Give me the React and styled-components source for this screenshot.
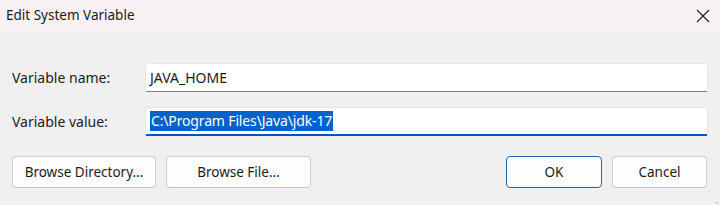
import React from "react";
import styled, { createGlobalStyle } from "styled-components";

const Global = createGlobalStyle`
  html, body { margin: 0; padding: 0; background: #f0f0f0; }
  body { font-family: "Noto Sans", "Open Sans", "Liberation Sans", sans-serif; }
  * { box-sizing: border-box; }
`;

const Dialog = styled.div`
  width: 720px;
  height: 205px;
  background: #f0f0f0;
  display: flex;
  flex-direction: column;
  position: relative;
  overflow: hidden;
`;

const TitleBar = styled.div`
  height: 32px;
  background: #f8f2f5;
  display: flex;
  align-items: center;
  justify-content: space-between;
  padding: 0 9px 0 6px;
`;

const Title = styled.div`
  font-size: 13.5px;
  color: #1a1a1a;
  padding-bottom: 2px;
`;

const CloseBtn = styled.div`
  width: 16px;
  height: 16px;
  display: flex;
  align-items: center;
  justify-content: center;
`;

const Content = styled.div`
  padding: 31px 12px 0 12px;
  display: flex;
  flex-direction: column;
`;

const Fields = styled.div`
  display: grid;
  grid-template-columns: 133px 1fr;
  row-gap: 15px;
  align-items: center;
`;

const Label = styled.div`
  font-size: 14px;
  color: #1b1b1b;
`;

const Input = styled.div`
  height: 29px;
  background: #ffffff;
  border: 1px solid #e6e6e6;
  border-bottom: ${(p) => (p.$focused ? "2px solid #0055b8" : "1px solid #7a7a7a")};
  border-radius: 3px 3px 2px 2px;
  display: flex;
  align-items: center;
  padding-left: 4px;
  font-size: 14px;
  color: #1b1b1b;
`;

const Selected = styled.span`
  background: #0063cc;
  color: #ffffff;
  padding: 0 1px;
  line-height: 20px;
  letter-spacing: -0.15px;
`;

const ButtonRow = styled.div`
  margin-top: 20px;
  display: flex;
  align-items: center;
  gap: 10px;
`;

const Button = styled.div`
  width: ${(p) => p.$w}px;
  height: 32px;
  background: #fdfdfd;
  border: ${(p) => (p.$primary ? "1.5px solid #1a66b5" : "1px solid #d0d0d0")};
  border-bottom-color: ${(p) => (p.$primary ? "#1a66b5" : "#c4c4c4")};
  border-radius: 4px;
  display: flex;
  align-items: center;
  justify-content: center;
  font-size: 13.5px;
  color: #1b1b1b;
  margin-left: ${(p) => p.$ml || 0}px;
  padding-bottom: 1px;
`;

const Grip = styled.div`
  position: absolute;
  right: 1px;
  bottom: 1px;
  width: 10px;
  height: 10px;
`;

export default function App() {
  return (
    <>
      <Global />
      <Dialog>
        <TitleBar>
          <Title>Edit System Variable</Title>
          <CloseBtn>
            <svg width="14" height="14" viewBox="0 0 14 14">
              <path d="M1 1 L13 13 M13 1 L1 13" stroke="#1a1a1a" strokeWidth="1.1" fill="none" />
            </svg>
          </CloseBtn>
        </TitleBar>
        <Content>
          <Fields>
            <Label>Variable name:</Label>
            <Input>JAVA_HOME</Input>
            <Label>Variable value:</Label>
            <Input $focused>
              <Selected>C:\Program Files\Java\jdk-17</Selected>
            </Input>
          </Fields>
          <ButtonRow>
            <Button $w={144}>Browse Directory...</Button>
            <Button $w={145}>Browse File...</Button>
            <Button $w={96} $primary $ml={185}>OK</Button>
            <Button $w={95}>Cancel</Button>
          </ButtonRow>
        </Content>
        <Grip>
          <svg width="10" height="10" viewBox="0 0 10 10">
            {[[8, 2], [8, 5], [5, 5], [8, 8], [5, 8], [2, 8]].map(([x, y], i) => (
              <rect key={i} x={x - 1} y={y - 1} width="1.5" height="1.5" fill="#b0b0b0" />
            ))}
          </svg>
        </Grip>
      </Dialog>
    </>
  );
}
